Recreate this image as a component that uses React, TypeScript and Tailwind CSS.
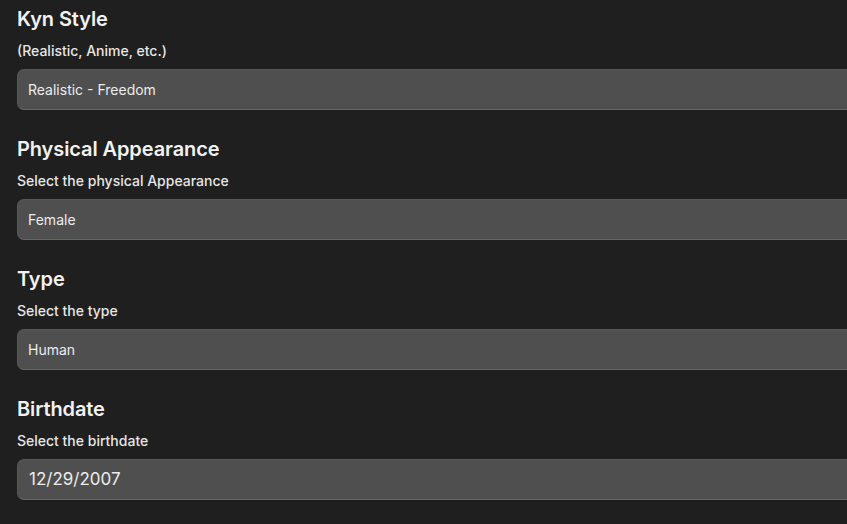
import React from 'react';

interface FieldProps {
  title: string;
  hint: string;
  value: string;
  big?: boolean;
}

function Field({ title, hint, value, big }: FieldProps) {
  return (
    <div className="flex flex-col">
      <h2 className="text-[20px] leading-[28px] font-semibold tracking-[-0.1px] text-[#f2f2f2]">{title}</h2>
      <p className="mt-[8px] text-[14px] leading-[20px] font-medium text-[#e6e6e6]">{hint}</p>
      <div
        className={
          'mt-[8px] h-[41px] w-[900px] flex items-center rounded-[7px] bg-[#4f4f4f] border border-[#575757] border-b-[#666666] text-[#ececec] ' +
          (big ? 'text-[17px] pl-[11px]' : 'text-[14px] pl-[10px]')
        }
      >
        {value}
      </div>
    </div>
  );
}

export default function App() {
  const fields: FieldProps[] = [
    { title: 'Kyn Style', hint: '(Realistic, Anime, etc.)', value: 'Realistic - Freedom' },
    { title: 'Physical Appearance', hint: 'Select the physical Appearance', value: 'Female' },
    { title: 'Type', hint: 'Select the type', value: 'Human' },
    { title: 'Birthdate', hint: 'Select the birthdate', value: '12/29/2007', big: true },
  ];

  return (
    <div
      className="w-[847px] h-[524px] overflow-hidden bg-[#1f1f1f] pl-[17px] pt-[5px]"
      style={{ fontFamily: 'Inter, "Noto Sans", sans-serif' }}
    >
      <div className="flex flex-col gap-[25px]">
        {fields.map((f) => (
          <Field key={f.title} {...f} />
        ))}
      </div>
    </div>
  );
}
